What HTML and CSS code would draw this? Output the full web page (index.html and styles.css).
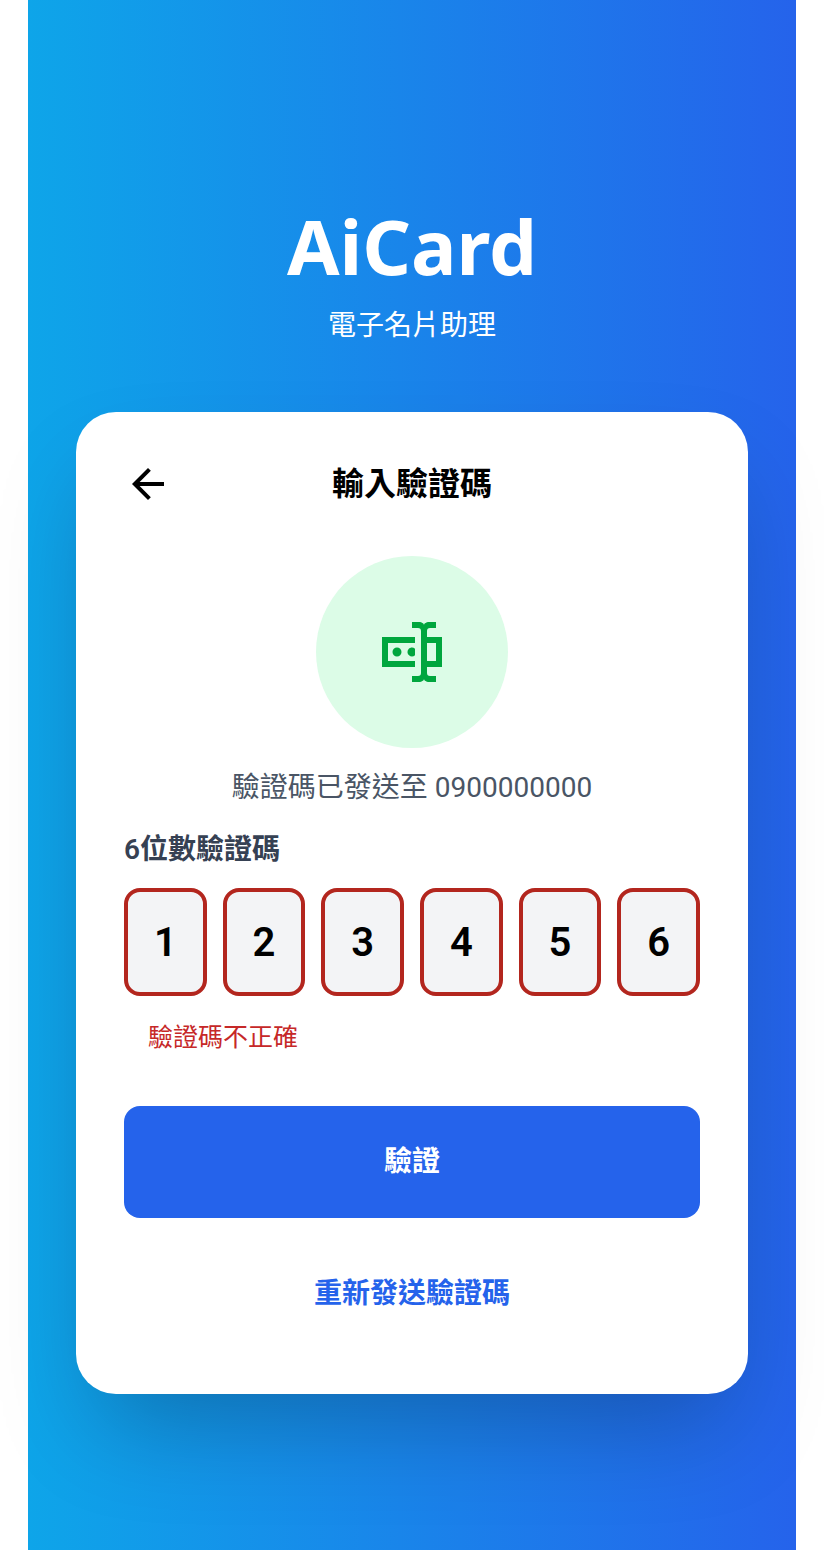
FILE: index.html
```html
<!DOCTYPE html>
<html lang="zh-Hant">
<head>
<meta charset="utf-8">
<meta name="viewport" content="width=device-width, initial-scale=1">
<title>AiCard</title>
<link rel="stylesheet" href="styles.css">
</head>
<body>
<main class="screen">
  <header class="brand">
    <h1 class="brand-name">AiCard</h1>
    <p class="brand-tagline">電子名片助理</p>
  </header>
  <form class="card">
    <div class="card-head">
      <button class="back" type="button" aria-label="返回">
        <svg class="back-icon" viewBox="0 0 24 24" aria-hidden="true"><path d="M20 11H7.83l5.59-5.59L12 4l-8 8 8 8 1.41-1.41L7.83 13H20v-2z"/></svg>
      </button>
      <h2 class="card-title">輸入驗證碼</h2>
    </div>
    <div class="badge">
      <svg class="badge-icon" viewBox="0 0 24 24" aria-hidden="true"><path d="M17,7H22V17H17V19A1,1 0 0,0 18,20H20V22H17.5C16.95,22 16,21.55 16,21C16,21.55 15.05,22 14.5,22H12V20H14A1,1 0 0,0 15,19V5A1,1 0 0,0 14,4H12V2H14.5C15.05,2 16,2.45 16,3C16,2.45 16.95,2 17.5,2H20V4H18A1,1 0 0,0 17,5V7M2,7H13V9H4V15H13V17H2V7M20,15V9H17V15H20M8.5,12A1.5,1.5 0 0,0 7,10.5A1.5,1.5 0 0,0 5.5,12A1.5,1.5 0 0,0 7,13.5A1.5,1.5 0 0,0 8.5,12M13,10.89C12.39,10.33 11.44,10.38 10.88,11C10.32,11.6 10.37,12.55 11,13.11C11.55,13.63 12.43,13.63 13,13.11V10.89Z"/></svg>
    </div>
    <p class="sent">驗證碼已發送至 0900000000</p>
    <label class="label" for="d1">6位數驗證碼</label>
    <div class="digits">
      <input class="digit" id="d1" type="text" inputmode="numeric" maxlength="1" value="1" aria-describedby="err">
      <input class="digit" type="text" inputmode="numeric" maxlength="1" value="2" aria-label="第2位">
      <input class="digit" type="text" inputmode="numeric" maxlength="1" value="3" aria-label="第3位">
      <input class="digit" type="text" inputmode="numeric" maxlength="1" value="4" aria-label="第4位">
      <input class="digit" type="text" inputmode="numeric" maxlength="1" value="5" aria-label="第5位">
      <input class="digit" type="text" inputmode="numeric" maxlength="1" value="6" aria-label="第6位">
    </div>
    <p class="error" id="err">驗證碼不正確</p>
    <button class="submit" type="submit">驗證</button>
    <button class="resend" type="button">重新發送驗證碼</button>
  </form>
</main>
</body>
</html>
```
FILE: styles.css
```css
* {
  box-sizing: border-box;
}

body {
  margin: 0;
  padding: 0 28px;
  background: #fff;
  font-family: Roboto, "Noto Sans CJK TC", sans-serif;
  font-size: 28px;
  line-height: 40px;
  color: #000;
}

h1, h2, p {
  margin: 0;
}

button {
  border: 0;
  padding: 0;
  background: none;
  font: inherit;
  cursor: pointer;
}

.screen {
  display: flex;
  flex-direction: column;
  justify-content: center;
  gap: 66px;
  min-height: 100vh;
  padding: 48px;
  background: linear-gradient(to right, #0ea5e9, #2563eb);
}

.brand {
  display: flex;
  flex-direction: column;
  gap: 12px;
  padding-top: 42px;
  text-align: center;
  color: #fff;
}

.brand-name {
  font-family: "Noto Sans", sans-serif;
  font-size: 76px;
  line-height: 96px;
  font-weight: 700;
}

.card {
  display: flex;
  flex-direction: column;
  padding: 48px 48px 80px;
  border-radius: 40px;
  background: #fff;
  box-shadow: 0 50px 100px -24px rgba(0, 0, 0, 0.25);
}

.card-head {
  display: grid;
  grid-template-columns: 48px 1fr 48px;
  align-items: center;
}

.back-icon {
  display: block;
  width: 48px;
  height: 48px;
}

.card-title {
  font-size: 32px;
  line-height: 48px;
  font-weight: 700;
  text-align: center;
}

.badge {
  display: grid;
  place-items: center;
  align-self: center;
  width: 192px;
  height: 192px;
  margin-top: 48px;
  border-radius: 50%;
  background: #dcfce7;
}

.badge-icon {
  width: 72px;
  height: 72px;
  fill: #00a63e;
}

.sent {
  margin-top: 20px;
  text-align: center;
  color: #4a5565;
}

.label {
  margin-top: 22px;
  font-weight: 600;
  color: #364153;
}

.digits {
  display: grid;
  grid-template-columns: repeat(6, 1fr);
  gap: 16px;
  margin-top: 18px;
}

.digit {
  width: 100%;
  height: 108px;
  padding: 0;
  border: 4px solid #b3261e;
  border-radius: 16px;
  background: #f3f4f6;
  font: 600 40px Roboto, sans-serif;
  color: #000;
  text-align: center;
}

.error {
  margin: 22px 24px 0;
  font-size: 25px;
  color: #c62828;
}

.submit {
  height: 112px;
  margin-top: 48px;
  border-radius: 16px;
  background: #2563eb;
  font-weight: 700;
  color: #fff;
}

.resend {
  align-self: center;
  margin-top: 56px;
  font-weight: 700;
  color: #2563eb;
}
```
